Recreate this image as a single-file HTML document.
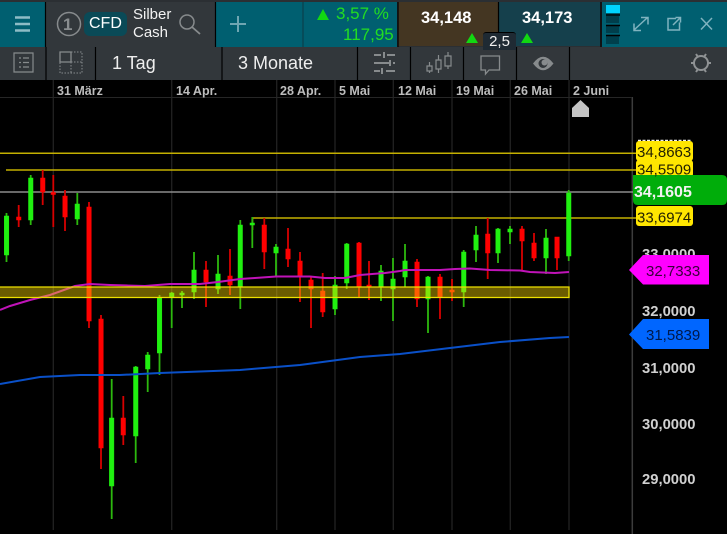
<!DOCTYPE html>
<html><head><meta charset="utf-8">
<style>
html,body{margin:0;padding:0;background:#000;}
body{width:727px;height:534px;overflow:hidden;position:relative;font-family:"Liberation Sans",sans-serif;}
.a{position:absolute;white-space:nowrap;filter:blur(.3px);}
svg{position:absolute;left:0;top:0;filter:blur(.3px);}
</style></head><body>
<div class="a" style="left:0;top:0;width:727px;height:47px;background:#2b2f33;filter:none"></div>
<div class="a" style="left:0;top:2px;width:45px;height:45px;background:#005f70;filter:none"></div>
<div class="a" style="left:46px;top:2px;width:169px;height:45px;background:#32373b;filter:none"></div>
<div class="a" style="left:216px;top:2px;width:181px;height:45px;background:#005f70;filter:none"></div>
<div class="a" style="left:398px;top:2px;width:100px;height:44px;background:#443622;filter:none"></div>
<div class="a" style="left:499px;top:2px;width:101px;height:44px;background:#15404c;filter:none"></div>
<div class="a" style="left:602px;top:2px;width:125px;height:45px;background:#005f70;filter:none"></div>
<div class="a" style="left:0;top:47px;width:727px;height:33px;background:#32373b;filter:none"></div>

<svg width="727" height="534" viewBox="0 0 727 534" style="z-index:1">
<g fill="none" stroke="#000" stroke-width="1.2">
<path d="M46 47V80M95.500 47V80M222 47V80M357.500 47V80M410.500 47V80M463.500 47V80M516.500 47V80M569.500 47V80M45.500 2V47M215.500 2V47M398 2V47M498.500 2V47M601 2V47"/>
</g>
<path d="M303 2V47" stroke="#0a3f4c" stroke-width="1.200"/>
<g fill="none" stroke="#8dbcc6" stroke-width="2.500"><path d="M15 17.500H30M15 24H30M15 30.500H30"/></g>
<g fill="none" stroke="#878b8d">
<circle cx="69" cy="24" r="11.500" stroke-width="1.500"/>
<circle cx="187" cy="22" r="7" stroke-width="1.500"/><path d="M192 27L200 34" stroke-width="1.800"/>
<path d="M14 53H33V72H14Z" stroke-width="1.200"/><path d="M19 58H21M23 58H29M19 62.500H21M23 62.500H29M19 67H21M23 67H29" stroke-width="1.200"/>
<path d="M60 52H71V62H60Z" stroke-width="1.300"/>
<path d="M71 52H82V73H60V62M71 62V73M71 62H82" stroke-width="1" stroke-dasharray="1.500 1.500"/>
<path d="M374 55H381M387 55H395M374 63H389M393 63H395M374 71H380M386 71H395" stroke-width="2"/>
<path d="M384 52V58M390 60V66M382 68V74" stroke-width="2"/>
<path d="M427 66H432V71H427ZM436 60H441V69H436ZM445 56H451V66H445ZM429.500 62V66M429.500 71V73M438.500 55V60M438.500 69V73M448 52V56M448 66V69" stroke-width="1.200"/>
<path d="M481 56H499.500V70H489L485.500 74V70H481Z" stroke-width="1.300"/>
</g>
<path d="M533 63.500Q543 50 553.500 63.500Q543 77 533 63.500Z" fill="#878b8d"/><circle cx="543" cy="63.500" r="4.500" fill="#32373b"/><circle cx="544.500" cy="62.500" r="3" fill="#878b8d"/>
<g fill="none" stroke="#8f9294" stroke-width="2"><circle cx="701" cy="63" r="7"/><path d="M691 63H694M708 63H711M696 54L698 57M706 54L704 57M696 72L698 69M706 72L704 69"/></g>
<path d="M238 16V32M230 24H246" stroke="#6fa6b2" stroke-width="2" fill="none"/>
<g fill="none" stroke="#7fb3bf" stroke-width="1.500">
<path d="M634 30L647 18M641 17.500H648V24.500M634 23.500V30.500H641"/>
<path d="M676 18.500H668V30H679.500V22.500M673 25L680 18M675.500 17.500H680.500V22.500"/>
<path d="M701 18L712 29.500M712 18L701 29.500"/>
</g>
<g fill="#003f4c"><rect x="606" y="16" width="13" height="7"/><rect x="606" y="26" width="13" height="7"/><rect x="606" y="36" width="13" height="8"/></g>
<rect x="606" y="5" width="14" height="8" fill="#00d4ff"/>
<path d="M606 15H620M606 25.500H620M606 35.500H620" stroke="#000" stroke-width="1.500"/>
<path d="M317 20L323 9L329 20ZM466 43L472 33L478 43ZM521 43L527 33L533 43Z" fill="#12d812"/>

<g stroke="#222" stroke-width="1.300" fill="none">
<path d="M53.300 80V530M171.700 80V530M276.700 80V530M335 80V530M393.300 80V530M452 80V530M510.300 80V530M569 80V530"/>
</g>
<path d="M632.300 97V534" stroke="#3c3c3c" stroke-width="1.500"/>
<path d="M0 97.500H632" stroke="#262626" stroke-width="1"/>
<g font-family="Liberation Sans" font-size="12.500" font-weight="bold" fill="#bdbdbd">
<text x="57" y="95">31 März</text><text x="176" y="95">14 Apr.</text><text x="280" y="95">28 Apr.</text>
<text x="339" y="95">5 Mai</text><text x="398" y="95">12 Mai</text><text x="456" y="95">19 Mai</text><text x="514" y="95">26 Mai</text><text x="573" y="95">2 Juni</text>
</g>
<path d="M572 117V108L580.500 100L589 108V117Z" fill="#c4c4c4"/>

<g fill="none">
<path d="M0 153.300H636M6 170H636M252.500 230V218H636" stroke="#c4b000" stroke-width="1.500"/>
<path d="M0 192H636" stroke="#8c8c8c" stroke-width="1.500"/>
</g>

<g stroke="#2cb80e" stroke-width="1.800" fill="none">
<path d="M6.500 213V262M30.700 175V225M77.300 193V225M111.700 379V519M135.700 366V463M147.700 352V392M159.500 295V375M171.700 292V328M182 291V308M194 252V299M218 255V294M240.300 220V309M252.300 217V248M276 244V276M335 276V315M346.700 243V289M381 265V301M393 258V321M405 244V287M428 276V333M463.700 250V307M476 226V262M498 228V263M510 226V244M546 229V274M568.700 190V261"/>
</g>
<g stroke="#d80000" stroke-width="1.800" fill="none">
<path d="M18.700 205V227M42.700 170V205M53.300 175V227M65 190V231M89 202V328M101 315V469M123.300 396V445M206 261V307M230 249V295M264.300 218V269M288 228V267M300 252V302M311 276V328M322.700 273V317M359 242V297M369 261V300M417 259V307M440 274V319M452 279V301M487.700 218V279M522 226V270M534 233V261M557 237V270"/>
</g>
<g fill="#20f010" stroke="#20f010" stroke-width=".5">
<rect x="4.300" y="216" width="4.500" height="39"/><rect x="28.500" y="178" width="4.500" height="42"/><rect x="75" y="204" width="4.500" height="15"/>
<rect x="109.400" y="418" width="4.500" height="68"/><rect x="133.500" y="367" width="4.500" height="69"/><rect x="145.500" y="355" width="4.500" height="14"/>
<rect x="157.300" y="298" width="4.500" height="55"/><rect x="169.500" y="293" width="4.500" height="4"/><rect x="179.800" y="293" width="4.500" height="2"/>
<rect x="191.800" y="270" width="4.500" height="22"/><rect x="215.800" y="274" width="4.500" height="15"/><rect x="238" y="225" width="4.500" height="62"/>
<rect x="250" y="223" width="4.500" height="2"/><rect x="273.800" y="247" width="4.500" height="6"/><rect x="332.800" y="285" width="4.500" height="24"/>
<rect x="344.500" y="244" width="4.500" height="39"/><rect x="378.800" y="271" width="4.500" height="16"/><rect x="390.800" y="279" width="4.500" height="10"/>
<rect x="402.800" y="261" width="4.500" height="16"/><rect x="425.800" y="277" width="4.500" height="22"/><rect x="461.500" y="252" width="4.500" height="40"/>
<rect x="473.800" y="235" width="4.500" height="15"/><rect x="495.800" y="229" width="4.500" height="24"/><rect x="507.800" y="229" width="4.500" height="3"/>
<rect x="543.800" y="238" width="4.500" height="20"/><rect x="566.500" y="193" width="4.500" height="63"/>
</g>
<g fill="#ff0000" stroke="#ff0000" stroke-width=".5">
<rect x="16.500" y="217" width="4.500" height="3"/><rect x="40.500" y="178" width="4.500" height="14"/><rect x="51" y="192.500" width="4.500" height="2"/>
<rect x="62.800" y="196" width="4.500" height="21"/><rect x="86.800" y="207" width="4.500" height="114"/><rect x="98.800" y="319" width="4.500" height="129"/>
<rect x="121" y="418" width="4.500" height="17"/><rect x="203.800" y="270" width="4.500" height="12"/><rect x="227.800" y="276" width="4.500" height="9"/>
<rect x="262" y="225" width="4.500" height="27"/><rect x="285.800" y="249" width="4.500" height="10"/><rect x="297.800" y="261" width="4.500" height="15"/>
<rect x="308.800" y="280" width="4.500" height="9"/><rect x="320.500" y="291" width="4.500" height="21"/><rect x="356.800" y="243" width="4.500" height="44"/>
<rect x="366.800" y="285" width="4.500" height="2"/><rect x="414.800" y="262" width="4.500" height="37"/><rect x="437.800" y="277" width="4.500" height="20"/>
<rect x="449.800" y="290" width="4.500" height="2"/><rect x="485.500" y="234" width="4.500" height="19"/><rect x="519.800" y="229" width="4.500" height="12"/>
<rect x="531.800" y="243" width="4.500" height="15"/><rect x="554.800" y="237" width="4.500" height="21"/>
</g>

<path d="M0 310L10 306L30 300L50 295L75 286L90 284L110 285L145 286L170 284L200 284L218 282L240 279L255 278L276 276.500L310 276.500L325 278L345 278L360 275L385 273L400 271L405 270L440 270L455 269L470 268.500L490 270L520 270.500L530 272L555 273L569 272" fill="none" stroke="#c013b8" stroke-width="2"/>
<path d="M0 384L40 377L80 375L120 375L160 373L240 370L300 365L360 357L400 354L450 348L500 342L550 338L569 337" fill="none" stroke="#0a50c8" stroke-width="2"/>
<rect x="-2" y="287" width="571" height="10.500" fill="rgba(255,220,0,.42)"/>
<path d="M-2 287H569V297.500H-2" fill="none" stroke="#ece000" stroke-width="1.300"/>

<path d="M638 140.500H692" stroke="#f0f0f0" stroke-width="1.500" stroke-dasharray="3 1.500"/>
<rect x="636" y="141" width="57" height="20" rx="3" fill="#ffe600"/>
<rect x="636" y="160" width="57" height="17" rx="3" fill="#ffe600"/>
<rect x="636" y="206" width="57" height="20" rx="3" fill="#ffe600"/>
<path d="M633 175H722Q727 175 727 180V200Q727 205 722 205H638Q633 205 633 200Z" fill="#00ad0a"/>
<g font-family="Liberation Sans" font-size="15" fill="#221f00">
<text x="637" y="157">34,8663</text><text x="637" y="174.500">34,5509</text><text x="637" y="222.500">33,6974</text>
</g>
<text x="634" y="197" font-family="Liberation Sans" font-size="16" font-weight="bold" fill="#f2f2f2">34,1605</text>
<g font-family="Liberation Sans" font-size="14.800" font-weight="bold" fill="#d0d0d0">
<text x="642" y="259">33,0000</text><text x="642" y="316">32,0000</text><text x="642" y="373">31,0000</text><text x="642" y="429">30,0000</text><text x="642" y="484">29,0000</text>
</g>
<path d="M629 270L643 255H709V284.500H643Z" fill="#ff00ff"/>
<path d="M629 334.500L643 319H709V349H643Z" fill="#0066ff"/>
<text x="646" y="276" font-family="Liberation Sans" font-size="15" fill="#38003a">32,7333</text>
<text x="646" y="340" font-family="Liberation Sans" font-size="15" fill="#00194a">31,5839</text>
<text x="63" y="30" font-family="Liberation Sans" font-size="17" font-weight="bold" fill="#8a8e90">1</text>
</svg>
<div class="a" style="left:84px;top:12px;z-index:2;width:43px;height:24px;border-radius:6px;background:#0a4a57"></div>
<div class="a" style="left:89px;top:13px;z-index:3;font-size:16px;line-height:22px;color:#fff">CFD</div>
<div class="a" style="left:133px;top:6px;z-index:3;font-size:15px;line-height:18px;color:#f2f2f2">Silber<br>Cash</div>
<div class="a" style="left:336px;top:4px;z-index:3;font-size:17px;line-height:20px;color:#22dd22">3,57 %</div>
<div class="a" style="left:343px;top:25px;z-index:3;font-size:17px;line-height:20px;color:#22dd22">117,95</div>
<div class="a" style="left:421px;top:8px;z-index:3;font-size:16.5px;line-height:20px;font-weight:bold;color:#fff">34,148</div>
<div class="a" style="left:522px;top:8px;z-index:3;font-size:16.5px;line-height:20px;font-weight:bold;color:#fff">34,173</div>
<div class="a" style="left:483px;top:32px;z-index:3;width:33px;height:17px;background:#1f2a33;border-radius:3px 3px 0 0;border-top:1px solid #000;text-align:center;font-size:15px;line-height:17px;color:#f0f0f0">2,5</div>
<div class="a" style="left:112px;top:52px;z-index:3;font-size:18px;line-height:23px;color:#eee">1 Tag</div>
<div class="a" style="left:238px;top:52px;z-index:3;font-size:18px;line-height:23px;color:#eee">3 Monate</div>
</body></html>
